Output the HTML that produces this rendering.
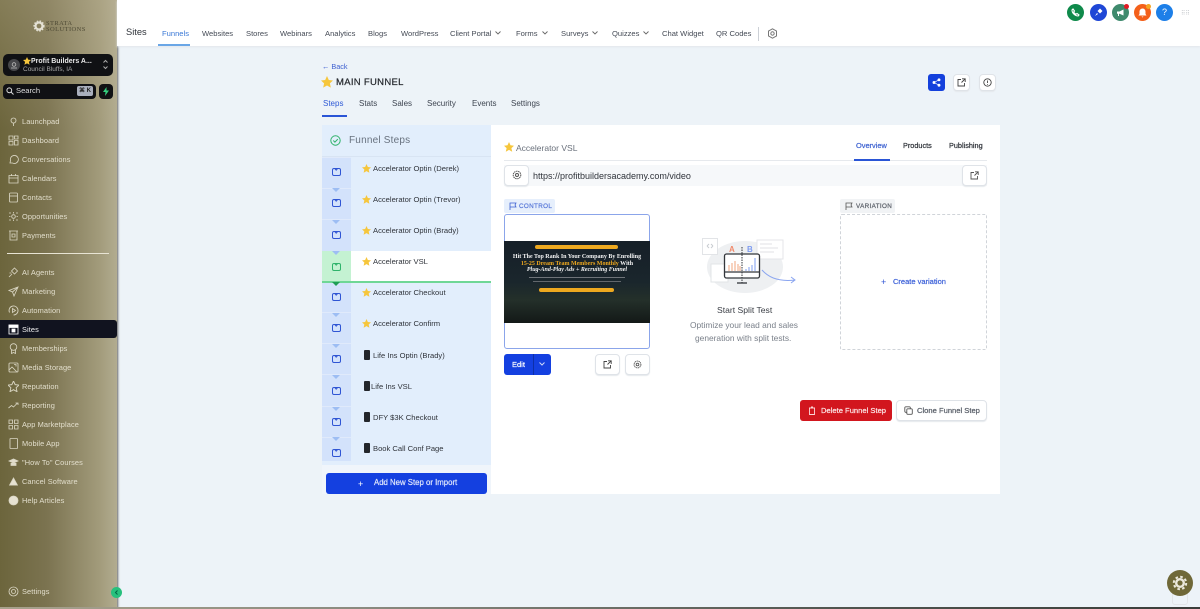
<!DOCTYPE html>
<html><head><meta charset="utf-8"><style>
html,body{margin:0;padding:0}
body{width:1200px;height:609px;overflow:hidden;position:relative;background:#edf3f8;font-family:"Liberation Sans",sans-serif;color:#2b2f36}
.a,.t{position:absolute}
.t{white-space:nowrap;line-height:12px}
.md{-webkit-text-stroke:.2px currentColor}
.side{left:0;top:0;width:117px;height:609px;background:linear-gradient(90deg,#6c653c 0,#7b7350 40%,#a29b7b 85%,#b2ac90 100%);box-shadow:1px 0 2px #666}
.topov{left:0;top:0;width:117px;height:130px;background:linear-gradient(180deg,rgba(190,180,150,.3),rgba(190,180,150,0))}
.m{left:22px;font-size:7.4px;color:#e2decc;letter-spacing:.1px}
.mi{left:8px;width:11px;height:11px;fill:none;stroke:#d9d5c2;stroke-width:.85}
.nav{top:28px;font-size:7.6px;color:#454b56}
.chev{top:31px;width:6px;height:4px;fill:none;stroke:#666;stroke-width:.9}
.btn{background:#fff;border:1px solid #dfe3e8;border-radius:4px;box-sizing:border-box;box-shadow:0 1px 1px #e5e8ec}
.cir{top:4px;width:17px;height:17px;border-radius:50%}
.lc{left:322px;width:29px;height:31px;background:#d3e2fb;border-top:1px solid #e0eafb;box-sizing:border-box}
.env{left:332px;width:9px;height:8px;border:1px solid #2f55d4;border-radius:2px;box-sizing:border-box;overflow:hidden}
.env:after{content:"";position:absolute;left:1.2px;top:-2.6px;width:3.4px;height:3.4px;border:solid #2f55d4;border-width:0 1px 1px 0;transform:rotate(45deg)}
.eg,.eg:after{border-color:#2fb36b}
.tri{left:332px;width:0;height:0;border:4px solid transparent;border-top:4px solid #9dbdf3;border-bottom:0}
.st{left:373px;font-size:7.6px;color:#30343b}
.star{position:absolute;fill:#f6c63c}
.ph{position:absolute;width:6px;height:10px;background:#23262b;border-radius:1px}
.tab{top:98px;font-size:8px;color:#3d4450}
</style></head><body>
<svg width="0" height="0" style="position:absolute"><defs><polygon id="s" points="5,0 6.5,3.3 10,3.7 7.4,6.1 8.2,9.7 5,7.9 1.8,9.7 2.6,6.1 0,3.7 3.5,3.3"/></defs></svg>

<div class="a side"></div><div class="a topov"></div>
<svg class="a" style="left:33px;top:20px" width="12" height="12" viewBox="0 0 12 12"><circle cx="6" cy="6" r="3.5" fill="none" stroke="#e5e2d5" stroke-width="2.2"/><circle cx="6" cy="6" r="5" fill="none" stroke="#e5e2d5" stroke-width="1.2" stroke-dasharray="1.6 1.4"/></svg>
<div class="t" style="left:46px;top:21px;font:6.5px/5.5px 'Liberation Serif',serif;color:#4e4a35;letter-spacing:.4px">STRATA<br>SOLUTIONS</div>

<div class="a" style="left:3px;top:54px;width:110px;height:22px;background:#101114;border-radius:5px"></div>
<div class="a" style="left:8px;top:59px;width:12px;height:12px;border-radius:50%;background:#46474a"></div>
<svg class="a" style="left:10px;top:61px" width="8" height="8" viewBox="0 0 8 8" fill="none" stroke="#bbb" stroke-width=".8"><circle cx="4" cy="3.5" r="1.800"/><path d="M1 7h6"/></svg>
<svg class="star" style="left:23px;top:57px" width="8" height="8" viewBox="0 0 10 10"><use href="#s"/></svg>
<div class="t" style="left:31px;top:56px;font-size:7px;font-weight:bold;color:#e9e9e9">Profit Builders A...</div>
<div class="t" style="left:23px;top:64px;font-size:6.5px;color:#a6a6a6">Council Bluffs, IA</div>
<svg class="a" style="left:102px;top:59px" width="7" height="11" viewBox="0 0 7 11" fill="none" stroke="#aaa"><path d="M1.500 3.500L3.500 1.500 5.500 3.500M1.500 7.500L3.500 9.500 5.500 7.500"/></svg>

<div class="a" style="left:3px;top:84px;width:93px;height:15px;background:#101114;border-radius:4px"></div>
<svg class="a" style="left:6px;top:87px" width="8" height="8" viewBox="0 0 8 8" fill="none" stroke="#ddd"><circle cx="3.300" cy="3.300" r="2.400"/><path d="M5 5L7.500 7.500"/></svg>
<div class="t" style="left:16px;top:85px;font-size:7.600px;color:#ddd">Search</div>
<div class="a" style="left:77px;top:86px;width:16px;height:10px;background:#aab0bd;border-radius:2px;font-size:6px;line-height:10px;text-align:center;color:#222;font-weight:bold">⌘ K</div>
<div class="a" style="left:99px;top:84px;width:14px;height:15px;background:#101114;border-radius:4px"></div>
<svg class="a" style="left:102px;top:87px" width="8" height="9" viewBox="0 0 8 9"><path d="M4.500 0L1 5h2.500L3 9l4-5.500H4.500z" fill="#35d07f"/></svg>

<div class="t m" style="top:116px">Launchpad</div>
<div class="t m" style="top:135px">Dashboard</div>
<div class="t m" style="top:154px">Conversations</div>
<div class="t m" style="top:173px">Calendars</div>
<div class="t m" style="top:192px">Contacts</div>
<div class="t m" style="top:211px">Opportunities</div>
<div class="t m" style="top:230px">Payments</div>
<div class="a" style="left:7px;top:253px;width:102px;height:1px;background:#e8e4d4"></div>
<div class="t m" style="top:267px">AI Agents</div>
<div class="t m" style="top:286px">Marketing</div>
<div class="t m" style="top:305px">Automation</div>
<div class="a" style="left:0;top:320px;width:117px;height:18px;background:#11131f;border-radius:0 3px 3px 0"></div>
<div class="t m" style="top:324px;color:#f2f2f2">Sites</div>
<div class="t m" style="top:343px">Memberships</div>
<div class="t m" style="top:362px">Media Storage</div>
<div class="t m" style="top:381px">Reputation</div>
<div class="t m" style="top:400px">Reporting</div>
<div class="t m" style="top:419px">App Marketplace</div>
<div class="t m" style="top:438px">Mobile App</div>
<div class="t m" style="top:457px">"How To" Courses</div>
<div class="t m" style="top:476px">Cancel Software</div>
<div class="t m" style="top:495px">Help Articles</div>
<div class="t m" style="top:586px">Settings</div>

<svg class="a mi" style="top:116px" viewBox="0 0 11 11"><circle cx="5.500" cy="4.500" r="2.500"/><path d="M5.500 7v3"/></svg>
<svg class="a mi" style="top:135px" viewBox="0 0 11 11"><path d="M1 1h4v4H1zM6.500 1H10v3H6.500zM1 6.500h4V10H1zM6.500 5.500H10V10H6.500z"/></svg>
<svg class="a mi" style="top:154px" viewBox="0 0 11 11"><path d="M2 9l.5-2.500A4 4 0 1 1 4.500 9z"/></svg>
<svg class="a mi" style="top:173px" viewBox="0 0 11 11"><path d="M1 2.500h9V10H1zM1 5h9M3.500 1v2M7.500 1v2"/></svg>
<svg class="a mi" style="top:192px" viewBox="0 0 11 11"><rect x="1.500" y="1" width="8" height="9" rx="1"/><path d="M1.500 4h8"/></svg>
<svg class="a mi" style="top:211px" viewBox="0 0 11 11"><circle cx="5.500" cy="5.500" r="1.800"/><path d="M1 2h2M1 5.500h1.500M1 9h2M8 2h2M8.500 5.500H10M8 9h2M5.500 1v1.500M5.500 8.500V10"/></svg>
<svg class="a mi" style="top:230px" viewBox="0 0 11 11"><path d="M2 1h7v9H2zM1 1h9M4 4h3v3H4z"/></svg>
<svg class="a mi" style="top:267px" viewBox="0 0 11 11"><path d="M6.500 1l3 3-3 3-3-3zM1 10l3-3M1.500 6h2"/></svg>
<svg class="a mi" style="top:286px" viewBox="0 0 11 11"><path d="M10 1L1 4.500l3.500 1.500 1.500 4zM4.500 6L10 1"/></svg>
<svg class="a mi" style="top:305px" viewBox="0 0 11 11"><path d="M1.500 7.500A4.500 4.500 0 1 1 5.500 10"/><path d="M4.500 3.500l3 2-3 2z"/></svg>
<svg class="a mi" style="top:324px;stroke:#fff;fill:#fff" viewBox="0 0 11 11"><path d="M1 1h9v9H1z" fill="none"/><path d="M1 1h9v2.500H1zM4 5h3v3H4z"/></svg>
<svg class="a mi" style="top:343px" viewBox="0 0 11 11"><circle cx="5.500" cy="4" r="3.300"/><path d="M3.500 7v3.500l2-1 2 1V7"/></svg>
<svg class="a mi" style="top:362px" viewBox="0 0 11 11"><rect x="1" y="1" width="9" height="9" rx="1"/><path d="M1 8l3-3 5 5M6 2.500h2v2"/></svg>
<svg class="a mi" style="top:381px" viewBox="0 0 10 10"><use href="#s"/></svg>
<svg class="a mi" style="top:400px" viewBox="0 0 11 11"><path d="M.5 8l3-2.500 2 1.500 4-4M7.500 3h2.500v2"/></svg>
<svg class="a mi" style="top:419px" viewBox="0 0 11 11"><path d="M1 1h3.500v3.500H1zM6.500 1H10v3.500H6.500zM1 6.500h3.500V10H1zM6.500 6.500H10V10H6.500z"/></svg>
<svg class="a mi" style="top:438px" viewBox="0 0 11 11"><rect x="2" y=".5" width="7.500" height="10" rx=".5"/></svg>
<svg class="a mi" style="top:457px;fill:#e0dccb" viewBox="0 0 11 11"><path d="M1 4l4.500-2L10 4 5.500 6zM3 6v2.500h5V6"/></svg>
<svg class="a mi" style="top:476px;fill:#e6e2d2;width:9px;left:9px" viewBox="0 0 11 11"><path d="M5.500 1L10.500 10H.5z"/></svg>
<svg class="a mi" style="top:495px;fill:#e6e2d2" viewBox="0 0 11 11"><circle cx="5.500" cy="5.500" r="4.500"/></svg>
<svg class="a mi" style="top:586px" viewBox="0 0 11 11"><circle cx="5.500" cy="5.500" r="4.500"/><circle cx="5.500" cy="5.500" r="2"/></svg>
<div class="a" style="left:111px;top:587px;width:11px;height:11px;border-radius:50%;background:#27c07d"></div>
<svg class="a" style="left:114px;top:590px" width="5" height="5" viewBox="0 0 5 5" fill="none" stroke="#064" stroke-width="1"><path d="M3.500.5L1.500 2.500 3.500 4.500"/></svg>

<div class="a" style="left:117px;top:0;width:1083px;height:46px;background:#fff;box-shadow:0 1px 2px #e2e6eb"></div>
<div class="t" style="left:126px;top:26px;font-size:9.300px;color:#2f333a">Sites</div>
<div class="t nav" style="left:162px;color:#3a78d6">Funnels</div>
<div class="a" style="left:158px;top:44px;width:32px;height:1.500px;background:#6aa6e6"></div>
<div class="t nav" style="left:202px">Websites</div>
<div class="t nav" style="left:246px">Stores</div>
<div class="t nav" style="left:280px">Webinars</div>
<div class="t nav" style="left:325px">Analytics</div>
<div class="t nav" style="left:368px">Blogs</div>
<div class="t nav" style="left:401px">WordPress</div>
<div class="t nav" style="left:450px">Client Portal</div>
<svg class="a chev" style="left:495px" viewBox="0 0 6 4"><path d="M.5.500L3 3 5.500.500"/></svg>
<div class="t nav" style="left:516px">Forms</div>
<svg class="a chev" style="left:542px" viewBox="0 0 6 4"><path d="M.5.500L3 3 5.500.500"/></svg>
<div class="t nav" style="left:561px">Surveys</div>
<svg class="a chev" style="left:592px" viewBox="0 0 6 4"><path d="M.5.500L3 3 5.500.500"/></svg>
<div class="t nav" style="left:612px">Quizzes</div>
<svg class="a chev" style="left:643px" viewBox="0 0 6 4"><path d="M.5.500L3 3 5.500.500"/></svg>
<div class="t nav" style="left:662px">Chat Widget</div>
<div class="t nav" style="left:716px">QR Codes</div>
<div class="a" style="left:758px;top:27px;width:1px;height:14px;background:#ccd0d6"></div>
<svg class="a" style="left:767px;top:28px" width="11" height="11" viewBox="0 0 11 11" fill="none" stroke="#777"><path d="M5.500.800L9.500 3v5L5.500 10.200 1.500 8V3z"/><circle cx="5.500" cy="5.500" r="1.700"/></svg>

<div class="a cir" style="left:1067px;background:#0f8a4b"></div>
<svg class="a" style="left:1071px;top:8px" width="9" height="9" viewBox="0 0 9 9" fill="none" stroke="#fff" stroke-width="1.100"><path d="M2 1l1.500 2-.8 1a4 4 0 0 0 2.300 2.300l1-.8 2 1.500-.8 1C4 8 1 5 1 2z"/></svg>
<div class="a cir" style="left:1090px;background:#1f47d6"></div>
<svg class="a" style="left:1094px;top:8px" width="9" height="9" viewBox="0 0 9 9" fill="#fff"><path d="M6 .500l2.500 2.500L6 5.500 3.500 3zM1 8l2-3 1 1z"/></svg>
<div class="a cir" style="left:1112px;background:#3f8a6d"></div>
<svg class="a" style="left:1116px;top:9px" width="9" height="8" viewBox="0 0 9 8" fill="#fff"><path d="M1 2.500h2.500L7.500.500v6L3.500 4.800H3V7H2V4.800H1z"/></svg>
<div class="a" style="left:1124px;top:4px;width:5px;height:5px;border-radius:50%;background:#e01b24"></div>
<div class="a cir" style="left:1134px;background:#f4601a"></div>
<svg class="a" style="left:1138px;top:8px" width="9" height="10" viewBox="0 0 9 10" fill="#fff"><path d="M4.500.500A3 3 0 0 1 7.500 3.500V6L8.500 7.500H.500L1.500 6V3.500A3 3 0 0 1 4.500.500zM3.500 8.500h2L4.500 9.500z"/></svg>
<div class="a" style="left:1146px;top:4px;width:5px;height:5px;border-radius:50%;background:#f5a623"></div>
<div class="a cir" style="left:1156px;background:#1d7fe8;color:#fff;font-size:9px;line-height:17px;text-align:center">?</div>
<div class="t" style="left:1181px;top:8px;font-size:6px;color:#c5c8cc">⠿⠿</div>

<div class="t" style="left:322px;top:61px;font-size:7.300px;color:#3d5fd0">← Back</div>
<svg class="star" style="left:321px;top:76px" width="12" height="12" viewBox="0 0 10 10"><use href="#s"/></svg>
<div class="t md" style="left:336px;top:76.500px;font-size:9.500px;color:#24272c;letter-spacing:.3px">MAIN FUNNEL</div>
<div class="t tab" style="left:323px;color:#2f5ad6">Steps</div>
<div class="a" style="left:322px;top:115px;width:25px;height:1.500px;background:#2a55d6"></div>
<div class="t tab" style="left:359px">Stats</div>
<div class="t tab" style="left:392px">Sales</div>
<div class="t tab" style="left:427px">Security</div>
<div class="t tab" style="left:472px">Events</div>
<div class="t tab" style="left:511px">Settings</div>

<div class="a" style="left:928px;top:74px;width:17px;height:17px;background:#1440dc;border-radius:3px"></div>
<svg class="a" style="left:932px;top:78px" width="9" height="9" viewBox="0 0 9 9" fill="#fff" stroke="#fff" stroke-width=".7"><circle cx="2" cy="4.500" r="1.100"/><circle cx="7" cy="1.800" r="1.100"/><circle cx="7" cy="7.200" r="1.100"/><path d="M2 4.500L7 1.800M2 4.500L7 7.200"/></svg>
<div class="a btn" style="left:953px;top:74px;width:17px;height:17px"></div>
<svg class="a" style="left:957px;top:78px" width="9" height="9" viewBox="0 0 9 9" fill="none" stroke="#444" stroke-width=".9"><path d="M4 1.500H1v6.500h6.500V5M5 .800h3.200V4M8 1L4.500 4.500"/></svg>
<div class="a btn" style="left:979px;top:74px;width:17px;height:17px"></div>
<svg class="a" style="left:983px;top:78px" width="9" height="9" viewBox="0 0 9 9" fill="none" stroke="#444" stroke-width=".9"><circle cx="4.500" cy="4.500" r="3.700"/><path d="M4.500 2.500v2.500M4.500 6v.800"/></svg>

<div class="a" style="left:322px;top:125px;width:169px;height:340px;background:#e2eefc"></div>
<div class="a" style="left:322px;top:465px;width:169px;height:29px;background:#f0f5fb"></div>
<div class="a" style="left:491px;top:125px;width:509px;height:369px;background:#fff"></div>
<svg class="a" style="left:330px;top:135px" width="11" height="11" viewBox="0 0 11 11" fill="none" stroke="#2fb36b"><circle cx="5.500" cy="5.500" r="4.700"/><path d="M3.300 5.500l1.600 1.600 2.900-3"/></svg>
<div class="t" style="left:349px;top:135px;font-size:10px;color:#68727f;letter-spacing:.2px">Funnel Steps</div>
<div class="a" style="left:322px;top:156px;width:169px;height:1px;background:#d8e4f3"></div>

<div class="a lc" style="top:157px"></div><div class="a lc" style="top:188px"></div><div class="a lc" style="top:219px;height:32px"></div>
<div class="a lc" style="top:251px;background:#c4f2d2;border:0"></div>
<div class="a lc" style="top:282px;height:30px"></div><div class="a lc" style="top:312px"></div><div class="a lc" style="top:343px"></div><div class="a lc" style="top:374px;height:32px"></div><div class="a lc" style="top:406px;height:31px"></div><div class="a lc" style="top:437px;height:24px"></div>
<div class="a" style="left:351px;top:251px;width:140px;height:30px;background:#fff"></div>
<div class="a" style="left:322px;top:281px;width:169px;height:1.500px;background:#6fd796"></div>

<div class="a env" style="top:168px"></div><div class="a env" style="top:199px"></div><div class="a env" style="top:231px"></div>
<div class="a env eg" style="top:263px"></div>
<div class="a env" style="top:293px"></div><div class="a env" style="top:324px"></div><div class="a env" style="top:355px"></div><div class="a env" style="top:387px"></div><div class="a env" style="top:418px"></div><div class="a env" style="top:449px"></div>
<div class="a tri" style="top:188px"></div><div class="a tri" style="top:220px"></div><div class="a tri" style="top:251px"></div>
<div class="a tri" style="top:282px;border-top-color:#1f9d55"></div>
<div class="a tri" style="top:313px"></div><div class="a tri" style="top:344px"></div><div class="a tri" style="top:375px"></div><div class="a tri" style="top:407px"></div><div class="a tri" style="top:437px"></div>

<svg class="star" style="left:362px;top:164px" width="9" height="9" viewBox="0 0 10 10"><use href="#s"/></svg><div class="t st" style="top:163px">Accelerator Optin (Derek)</div>
<svg class="star" style="left:362px;top:195px" width="9" height="9" viewBox="0 0 10 10"><use href="#s"/></svg><div class="t st" style="top:194px">Accelerator Optin (Trevor)</div>
<svg class="star" style="left:362px;top:226px" width="9" height="9" viewBox="0 0 10 10"><use href="#s"/></svg><div class="t st" style="top:225px">Accelerator Optin (Brady)</div>
<svg class="star" style="left:362px;top:257px" width="9" height="9" viewBox="0 0 10 10"><use href="#s"/></svg><div class="t st" style="top:256px">Accelerator VSL</div>
<svg class="star" style="left:362px;top:288px" width="9" height="9" viewBox="0 0 10 10"><use href="#s"/></svg><div class="t st" style="top:287px">Accelerator Checkout</div>
<svg class="star" style="left:362px;top:319px" width="9" height="9" viewBox="0 0 10 10"><use href="#s"/></svg><div class="t st" style="top:318px">Accelerator Confirm</div>
<div class="ph" style="left:364px;top:350px"></div><div class="t st" style="top:350px">Life Ins Optin (Brady)</div>
<div class="ph" style="left:364px;top:381px"></div><div class="t st" style="left:371px;top:381px">Life Ins VSL</div>
<div class="ph" style="left:364px;top:412px"></div><div class="t st" style="top:412px">DFY $3K Checkout</div>
<div class="ph" style="left:364px;top:443px"></div><div class="t st" style="top:443px">Book Call Conf Page</div>

<div class="a" style="left:326px;top:473px;width:161px;height:21px;background:#1440e0;border-radius:3px"></div>
<div class="t" style="left:358px;top:478px;font-size:9px;color:#fff">+</div>
<div class="t md" style="left:374px;top:477px;font-size:7.800px;color:#dfe6fb">Add New Step or Import</div>

<svg class="star" style="left:504px;top:142px" width="10" height="10" viewBox="0 0 10 10"><use href="#s"/></svg>
<div class="t" style="left:516px;top:141.500px;font-size:8.500px;color:#6a717c">Accelerator VSL</div>
<div class="a" style="left:504px;top:160px;width:483px;height:1px;background:#e6e9ed"></div>
<div class="t md" style="left:856px;top:140px;font-size:7.400px;color:#3a5fd0">Overview</div>
<div class="a" style="left:854px;top:159px;width:36px;height:1.500px;background:#2a55d6"></div>
<div class="t md" style="left:903px;top:140px;font-size:7.300px;color:#2b2f36">Products</div>
<div class="t md" style="left:949px;top:140px;font-size:7.300px;color:#2b2f36">Publishing</div>

<div class="a" style="left:504px;top:165px;width:483px;height:21px;background:#f6f8fa"></div>
<div class="a btn" style="left:504px;top:165px;width:25px;height:21px"></div>
<svg class="a" style="left:512px;top:170px" width="10" height="10" viewBox="0 0 10 10" fill="none" stroke="#555"><circle cx="5" cy="5" r="3.800" stroke-dasharray="1.500 .6"/><circle cx="5" cy="5" r="1.500"/></svg>
<div class="t" style="left:533px;top:169.500px;font-size:9px;color:#30343b">https://profitbuildersacademy.com/video</div>
<div class="a btn" style="left:962px;top:165px;width:25px;height:21px"></div>
<svg class="a" style="left:970px;top:171px" width="9" height="9" viewBox="0 0 9 9" fill="none" stroke="#555" stroke-width=".9"><path d="M4 1.500H1v6.500h6.500V5M5 .800h3.200V4M8 1L4.500 4.500"/></svg>

<div class="a" style="left:504px;top:199px;width:51px;height:14px;background:#e6effc;border-radius:2px"></div>
<svg class="a" style="left:509px;top:202px" width="8" height="8" viewBox="0 0 8 8" fill="none" stroke="#3a5fd0" stroke-width=".8"><path d="M1 8V1h6L6 3l1 2H1"/></svg>
<div class="t md" style="left:519px;top:201px;font-size:6.300px;color:#5878d8;letter-spacing:.35px">CONTROL</div>
<div class="a" style="left:504px;top:214px;width:146px;height:135px;border:1px solid #8ba5ea;border-radius:3px;box-sizing:border-box;background:#fff"></div>
<div class="a" style="left:504px;top:241px;width:146px;height:82px;background:linear-gradient(180deg,#161f28 0,#1a262c 50%,#24302a 72%,#131917 100%)"></div>
<div class="a" style="left:535px;top:245px;width:83px;height:4px;background:#eda81f;border-radius:2px"></div>
<div class="a" style="left:504px;top:254px;width:146px;text-align:center;font:bold 6px/6.600px 'Liberation Serif',serif;color:#f2f2f2">Hit The Top Rank In Your Company By Enrolling<br><span style="color:#eda81f">15-25 Dream Team Members Monthly</span> With<br><i>Plug-And-Play Ads + Recruiting Funnel</i></div>
<div class="a" style="left:529px;top:276.500px;width:96px;height:1.500px;background:#6f7479"></div>
<div class="a" style="left:533px;top:280.500px;width:88px;height:1.500px;background:#62676c"></div>
<div class="a" style="left:539px;top:288px;width:75px;height:4px;background:#eda81f;border-radius:2px"></div>

<div class="a" style="left:504px;top:354px;width:47px;height:21px;background:#1440e0;border-radius:3px"></div>
<div class="a" style="left:533px;top:354px;width:1px;height:21px;background:#0e2fa8"></div>
<div class="t md" style="left:512px;top:358.500px;font-size:7.500px;color:#fff">Edit</div>
<svg class="a" style="left:539px;top:362px" width="6" height="4" viewBox="0 0 6 4" fill="none" stroke="#cfd8f8"><path d="M.5.500L3 3 5.500.500"/></svg>
<div class="a btn" style="left:595px;top:354px;width:25px;height:21px"></div>
<svg class="a" style="left:603px;top:360px" width="9" height="9" viewBox="0 0 9 9" fill="none" stroke="#444" stroke-width=".9"><path d="M4 1.500H1v6.500h6.500V5M5 .800h3.200V4M8 1L4.500 4.500"/></svg>
<div class="a btn" style="left:625px;top:354px;width:25px;height:21px"></div>
<svg class="a" style="left:633px;top:360px" width="9" height="9" viewBox="0 0 10 10" fill="none" stroke="#555"><circle cx="5" cy="5" r="3.800" stroke-dasharray="1.500 .6"/><circle cx="5" cy="5" r="1.500"/></svg>

<svg class="a" style="left:700px;top:238px" width="98" height="62" viewBox="0 0 98 62">
<ellipse cx="45" cy="29" rx="38" ry="26" fill="#eef0f2"/>
<rect x="2.500" y=".5" width="15" height="16" fill="#fff" stroke="#e2e4e7"/><path d="M7 8l2-2M7 8l2 2M13 8l-2-2M13 8l-2 2" stroke="#c9ccd1" fill="none"/>
<rect x="57" y="2" width="26" height="19" fill="#fff" stroke="#e4e6e9"/><path d="M60 6h12M60 10h18M60 14h14" stroke="#e0e2e5"/>
<rect x="11" y="26" width="17" height="18" fill="#fff" stroke="#e2e4e7"/>
<text x="29" y="14" font-family="Liberation Sans" font-size="8" font-weight="bold" fill="#f0896b">A</text>
<text x="47" y="14" font-family="Liberation Sans" font-size="8" font-weight="bold" fill="#7e9cf0">B</text>
<rect x="24.500" y="16" width="35" height="24" rx="2" fill="#fff" stroke="#33363b" stroke-width="1.300"/>
<path d="M24.500 34h35" stroke="#33363b" stroke-width="1.300"/>
<path d="M29 33v-6M32 33v-8M35 33v-10M38 33v-7M40 33v-5" stroke="#f2a57e"/>
<path d="M46 33v-2M49 33v-4M52 33v-6M55 33v-13" stroke="#7e9cf0"/>
<path d="M42 9V45" stroke="#33363b" stroke-dasharray="1.500 1"/><path d="M37 45h10" stroke="#33363b" stroke-width="1.300"/>
<path d="M62 32c6 7 16 12 33 10M91 39l4 3-4 3" fill="none" stroke="#8aa5f0"/>
</svg>
<div class="t" style="left:717px;top:303.500px;font-size:8.600px;color:#3a3e45">Start Split Test</div>
<div class="t" style="left:690px;top:319px;font-size:8.400px;color:#7a808a">Optimize your lead and sales</div>
<div class="t" style="left:695px;top:331.500px;font-size:8.400px;color:#7a808a">generation with split tests.</div>

<div class="a" style="left:840px;top:199px;width:55px;height:14px;background:#f1f3f5;border-radius:2px"></div>
<svg class="a" style="left:845px;top:202px" width="8" height="8" viewBox="0 0 8 8" fill="none" stroke="#555" stroke-width=".8"><path d="M1 8V1h6L6 3l1 2H1"/></svg>
<div class="t md" style="left:856px;top:201px;font-size:6.300px;color:#5b6069;letter-spacing:.35px">VARIATION</div>
<div class="a" style="left:840px;top:214px;width:147px;height:136px;border:1px dashed #d0d4d9;box-sizing:border-box;border-radius:2px"></div>
<div class="t" style="left:881px;top:276px;font-size:9px;color:#2f55d4">+</div>
<div class="t md" style="left:893px;top:276px;font-size:7.500px;color:#3a5fd8">Create variation</div>

<div class="a" style="left:800px;top:400px;width:92px;height:21px;background:#d2161e;border-radius:3px"></div>
<svg class="a" style="left:808px;top:406px" width="8" height="9" viewBox="0 0 8 9" fill="none" stroke="#fbd5d7" stroke-width=".9"><path d="M1 2h6M3 1h2M1.500 2v6.500h5V2"/></svg>
<div class="t md" style="left:821px;top:404.500px;font-size:7.600px;color:#fde8e9">Delete Funnel Step</div>
<div class="a btn" style="left:896px;top:400px;width:91px;height:21px"></div>
<svg class="a" style="left:904px;top:406px" width="9" height="9" viewBox="0 0 9 9" fill="none" stroke="#555" stroke-width=".9"><rect x=".8" y=".8" width="5.500" height="5.500" rx="1"/><rect x="2.800" y="2.800" width="5.500" height="5.500" rx="1" fill="#fff"/></svg>
<div class="t md" style="left:917px;top:404.500px;font-size:7.600px;color:#555b65">Clone Funnel Step</div>

<div class="a" style="left:1172px;top:592px;width:16px;height:13px;border:1px solid #e2e5e8;border-radius:3px;box-sizing:border-box"></div>
<div class="a" style="left:1167px;top:570px;width:26px;height:26px;border-radius:50%;background:#6f6838"></div>
<svg class="a" style="left:1172px;top:575px" width="16" height="16" viewBox="0 0 16 16" fill="none" stroke="#ebe8dc"><circle cx="8" cy="8" r="3.800" stroke-width="2.400"/><circle cx="8" cy="8" r="6.200" stroke-width="2" stroke-dasharray="2.600 2.270"/></svg>
<div class="a" style="left:0;top:607px;width:1200px;height:2px;background:linear-gradient(90deg,#a8a28c,#8a8a80 30%,#50544f 70%,#3a3d3a)"></div>
</body></html>
